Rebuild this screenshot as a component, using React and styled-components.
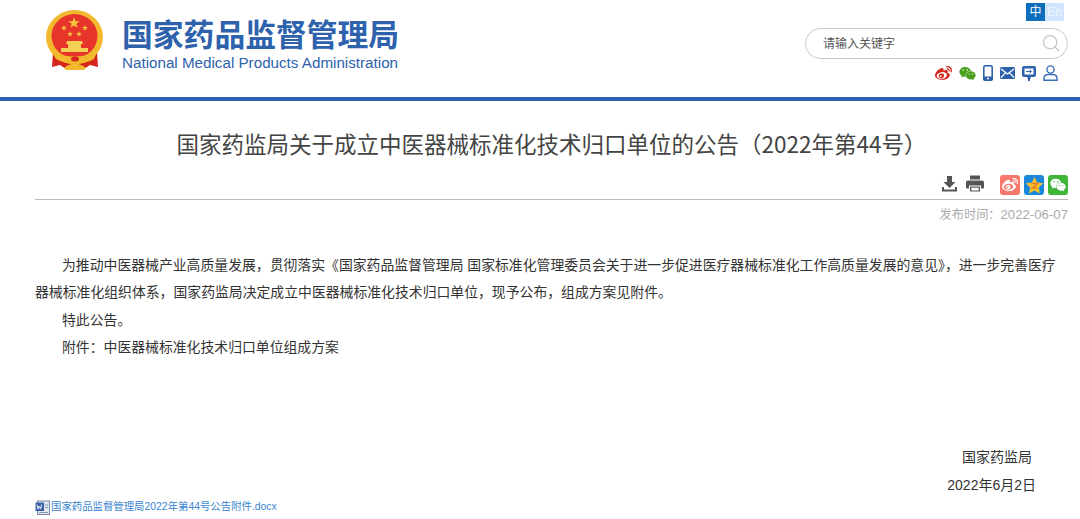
import React from 'react'
import styled, { createGlobalStyle } from 'styled-components'
import { FaWeibo, FaWeixin } from 'react-icons/fa'
import { Search } from 'lucide-react'

const GlobalStyle = createGlobalStyle`
  html, body { margin: 0; padding: 0; background: #fff; }
  body {
    width: 1080px;
    height: 519px;
    overflow: hidden;
    font-family: "Liberation Sans", "Noto Sans CJK SC", sans-serif;
    color: #333;
  }
`

const Header = styled.header`
  height: 97px;
  border-bottom: 4px solid #2e5fad;
  display: flex;
  justify-content: space-between;
`

const Brand = styled.div`
  display: flex;
  align-items: flex-start;
  gap: 18px;
  padding: 10px 0 0 46px;
`

const BrandText = styled.div`
  display: flex;
  flex-direction: column;
  padding-top: 1px;
`

const BrandName = styled.div`
  font-family: "Noto Sans CJK SC", sans-serif;
  font-size: 30.8px;
  font-weight: 700;
  line-height: 44px;
  color: #2e62ad;
  white-space: nowrap;
`

const BrandEn = styled.div`
  font-family: "Liberation Sans", sans-serif;
  font-size: 15.2px;
  line-height: 16px;
  color: #2e62ad;
  white-space: nowrap;
`

const Tools = styled.div`
  width: 275px;
  padding: 3px 12px 0 0;
  box-sizing: border-box;
  display: flex;
  flex-direction: column;
  align-items: flex-end;
`

const LangSwitch = styled.div`
  display: flex;
  margin-right: 4px;
`

const Lang = styled.span`
  width: 19px;
  height: 18px;
  font-size: 12px;
  line-height: 18px;
  text-align: center;
  color: ${p => (p.$active ? '#fff' : '#eef6ff')};
  background: ${p => (p.$active ? '#0b6dbb' : '#cfe6fd')};
`

const SearchBox = styled.div`
  width: 263px;
  height: 31px;
  margin-top: 7px;
  box-sizing: border-box;
  border: 1px solid #c8c8c8;
  border-radius: 16px;
  display: flex;
  align-items: center;
  justify-content: space-between;
  padding: 0 6px 2px 17px;
  font-size: 12px;
  color: #555;
`

const IconRow = styled.div`
  display: flex;
  align-items: center;
  gap: 7px;
  height: 16px;
  margin-top: 6px;
  margin-right: 10px;
`

const Main = styled.main`
  padding: 0 12px 0 35px;
`

const Title = styled.h1`
  margin: 0;
  padding-top: 26px;
  font-family: "Noto Sans CJK SC", sans-serif;
  font-size: 22.5px;
  font-weight: 400;
  line-height: 32px;
  text-align: center;
  color: #444;
`

const ShareBar = styled.div`
  height: 41px;
  box-sizing: border-box;
  border-bottom: 1px solid #bbb;
  display: flex;
  justify-content: flex-end;
  align-items: flex-start;
  padding-top: 16px;
  gap: 4px;
`

const ShareAction = styled.span`
  display: flex;
  margin-right: ${p => p.$gap}px;
`

const ShareTile = styled.span`
  width: 20px;
  height: 20px;
  border-radius: 3px;
  background: ${p => p.$bg};
  display: flex;
  align-items: center;
  justify-content: center;
`

const PubDate = styled.div`
  margin-top: 6px;
  font-size: 13.2px;
  line-height: 18px;
  text-align: right;
  color: #aaa;
`

const DateLabel = styled.span`
  font-size: 12.2px;
`

const Body = styled.div`
  padding-top: 28px;
  font-size: 13.85px;
  line-height: 27.3px;
  color: #333;
`

const Para = styled.p`
  margin: 0;
  text-indent: 27px;
`

const Sign = styled.div`
  margin-top: 83px;
  font-size: 14px;
  line-height: 27.5px;
  text-align: right;
  color: #333;
`

const SignLine = styled.div`
  padding-right: ${p => p.$inset}px;
`

const Attachment = styled.a`
  display: flex;
  align-items: center;
  gap: 1px;
  font-size: 10.4px;
  line-height: 16px;
  color: #3a86d0;
  text-decoration: none;
`

const Star = ({ x, y, r }) => (
  <path
    transform={`translate(${x} ${y}) scale(${r})`}
    d="M0-1 L.24-.31 L.95-.31 L.38 .12 L.59 .81 L0 .4 L-.59 .81 L-.38 .12 L-.95-.31 L-.24-.31 Z"
    fill="#f8c93f"
  />
)

const Emblem = () => (
  <svg width="58" height="60" viewBox="0 0 58 60">
    <path d="M7 42 L6 57 L14 55 L20 59 L38 59 L44 55 L52 57 L51 42 Z" fill="#d4261d" />
    <ellipse cx="28.500" cy="27" rx="28.500" ry="27" fill="#f2b92f" />
    <ellipse cx="28.500" cy="26" rx="23" ry="22" fill="#e8352b" />
    <Star x={28} y={13} r={6} />
    <Star x={18} y={18} r={3} />
    <Star x={39} y={18} r={3} />
    <Star x={24} y={24} r={3} />
    <Star x={33} y={24} r={3} />
    <path d="M21 31 h15 l1 3 h-2 v4 h7 v4 h-27 v-4 h7 v-4 h-2 z" fill="#f6cf57" />
    <path d="M6 42 q22 9 45 0 l-3 7 q-9 5-19 5 q-10 0-19-5 z" fill="#f2b92f" />
    <path d="M18 58 q11-9 22 0 l-2 2 h-18 z" fill="#f2b92f" />
    <ellipse cx="29" cy="49" rx="4" ry="2.500" fill="#d4261d" />
  </svg>
)

const Phone = () => (
  <svg width="10" height="16" viewBox="0 0 10 16">
    <rect x="0.8" y="0.8" width="8.400" height="14.400" rx="1.500" fill="#fff" stroke="#2e62ad" strokeWidth="1.600" />
    <rect x="0.500" y="11.500" width="9" height="4" rx="1" fill="#2e62ad" />
    <circle cx="5" cy="13.500" r="1" fill="#fff" />
  </svg>
)

const Mail = () => (
  <svg width="15" height="12" viewBox="0 0 15 12">
    <rect width="15" height="12" rx="1.500" fill="#2e62ad" />
    <path d="M1 2 L7.500 7 L14 2 M1 10.500 L5.500 5.800 M14 10.500 L9.500 5.800" stroke="#fff" strokeWidth="1.200" fill="none" />
  </svg>
)

const Screen = () => (
  <svg width="14" height="15" viewBox="0 0 14 15">
    <rect width="14" height="11" rx="2" fill="#2e62ad" />
    <rect x="2.500" y="2.500" width="9" height="6" fill="#fff" />
    <path d="M4 5.500 h5 M7.500 3.800 l2 1.700 l-2 1.700" stroke="#2e62ad" strokeWidth="1" fill="none" />
    <path d="M5.500 11 h3 v2 h-3 z M6 13 h2 v2 h-2 z" fill="#2e62ad" />
  </svg>
)

const User = () => (
  <svg width="15" height="16" viewBox="0 0 15 16" fill="none" stroke="#3a6db8" strokeWidth="1.400">
    <circle cx="7.500" cy="4.500" r="3.600" />
    <path d="M1 15.200 v-1.700 q0-3.800 4-4 h5 q4 .2 4 4 v1.700 z" />
  </svg>
)

const Download = () => (
  <svg width="17" height="17" viewBox="0 0 17 17" fill="#555">
    <path d="M6 1 h5 v6 h3.500 l-6 6 l-6-6 h3.500 z" />
    <path d="M1 12 h2 v2.500 h11 v-2.500 h2 v4.500 h-15 z" />
  </svg>
)

const Printer = () => (
  <svg width="18" height="17" viewBox="0 0 18 17" fill="#555">
    <path d="M4 0.500 h10 v4 h-10 z" />
    <path d="M2 5.500 h14 q2 0 2 2 v5 q0 1-1 1 h-2 v-3 h-12 v3 h-2 q-1 0-1-1 v-5 q0-2 2-2 z" />
    <path d="M4 11.500 h10 v5 h-10 z" />
    <rect x="5.300" y="12.700" width="7.400" height="2.800" fill="#fff" />
  </svg>
)

const QzoneStar = () => (
  <svg width="19" height="19" viewBox="0 0 19 19">
    <path d="M9.500 1 l2.600 5.600 l6.200 .7 l-4.600 4.200 l1.300 6.100 l-5.500-3.100 l-5.500 3.100 l1.300-6.100 l-4.600-4.200 l6.200-.7 z" fill="#f8c22c" />
    <path d="M6.500 7.500 h6 l-5 4.500 h5" stroke="#e8792a" strokeWidth="1.500" fill="none" />
  </svg>
)

const WordDoc = () => (
  <svg width="15" height="15" viewBox="0 0 15 15">
    <rect x="2.500" y="1" width="12" height="13.500" fill="#dfe6f0" stroke="#7a8aa3" />
    <rect x="0.500" y="2.500" width="8.500" height="8.500" fill="#3a62a8" />
    <path d="M2 4.500 l1 4.500 l1.300-3 l1.300 3 l1-4.500" stroke="#fff" strokeWidth="0.900" fill="none" />
    <path d="M10 5 h3 M10 7.500 h3 M4 12.500 h9" stroke="#8a9ab5" />
  </svg>
)

const App = () => {
  return (
    <>
      <GlobalStyle />
      <Header>
        <Brand>
          <Emblem />
          <BrandText>
            <BrandName>国家药品监督管理局</BrandName>
            <BrandEn>National Medical Products Administration</BrandEn>
          </BrandText>
        </Brand>
        <Tools>
          <LangSwitch>
            <Lang $active>中</Lang>
            <Lang>En</Lang>
          </LangSwitch>
          <SearchBox>
            <span>请输入关键字</span>
            <Search size={20} color="#c4c4c4" strokeWidth={1.5} />
          </SearchBox>
          <IconRow>
            <FaWeibo size={17} color="#d7261e" />
            <FaWeixin size={17} color="#4aa01c" />
            <Phone />
            <Mail />
            <Screen />
            <User />
          </IconRow>
        </Tools>
      </Header>
      <Main>
        <Title>国家药监局关于成立中医器械标准化技术归口单位的公告（2022年第44号）</Title>
        <ShareBar>
          <ShareAction $gap={4}><Download /></ShareAction>
          <ShareAction $gap={12}><Printer /></ShareAction>
          <ShareTile $bg="#f7776d"><FaWeibo size={16} color="#fff" /></ShareTile>
          <ShareTile $bg="#1a87dc"><QzoneStar /></ShareTile>
          <ShareTile $bg="#3fb53a"><FaWeixin size={16} color="#fff" /></ShareTile>
        </ShareBar>
        <PubDate><DateLabel>发布时间：</DateLabel>2022-06-07</PubDate>
        <Body>
          <Para>为推动中医器械产业高质量发展，贯彻落实《国家药品监督管理局 国家标准化管理委员会关于进一步促进医疗器械标准化工作高质量发展的意见》，进一步完善医疗器械标准化组织体系，国家药监局决定成立中医器械标准化技术归口单位，现予公布，组成方案见附件。</Para>
          <Para>特此公告。</Para>
          <Para>附件：中医器械标准化技术归口单位组成方案</Para>
        </Body>
        <Sign>
          <SignLine $inset={36}>国家药监局</SignLine>
          <SignLine $inset={32}>2022年6月2日</SignLine>
        </Sign>
        <Attachment href="#">
          <WordDoc />
          国家药品监督管理局2022年第44号公告附件.docx
        </Attachment>
      </Main>
    </>
  )
}

export default App
